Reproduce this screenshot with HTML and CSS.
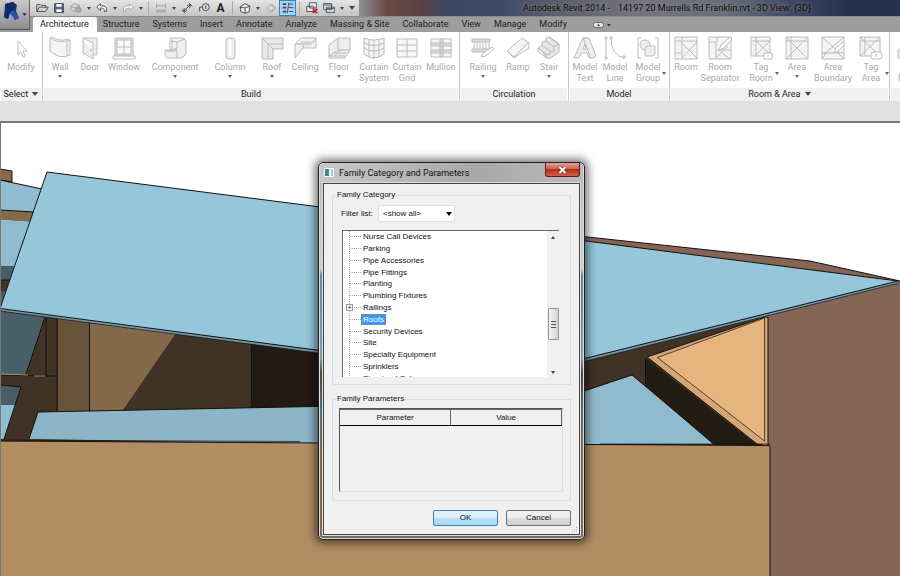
FILE: index.html
```html
<!DOCTYPE html>
<html lang="en">
<head>
<meta charset="utf-8">
<title>Autodesk Revit 2014 - 14197 20 Murrells Rd Franklin.rvt - 3D View: {3D}</title>
<link rel="stylesheet" href="styles.css">
</head>
<body>
<header class="top">
  <button class="app-button" aria-label="Application menu">
    <svg width="30" height="30" viewBox="0 0 30 30">
      <path d="M5 4L13 2L17 5L16 11L19 18L15 20L10 13L8 19L4 17Z" fill="#123a84"/>
      <path d="M5 4L13 2L16 5L14 10L10 12L8 19L4 17L6 10Z" fill="#0d2a66"/>
      <path d="M10 12L14 10L19 18L15 20Z" fill="#2557ad"/>
      <path d="M22 13h5l-2.500 3z" fill="#444"/>
    </svg>
  </button>
  <div class="top-rows">
    <div class="title-row">
      <nav class="quick" aria-label="Quick access">
        <button class="q" aria-label="Open"><svg viewBox="0 0 16 16"><path d="M2 12V4h4l1 1h5v2M2 12l3-5h10l-3 5z"/></svg></button>
        <button class="q" aria-label="Save"><svg viewBox="0 0 16 16"><path d="M3 3h10v10H3z" fill="#5c6470"/><path d="M5 3.500h6v3H5zM5 9.500h6v3H5z" fill="#fff" stroke="none"/></svg></button>
        <button class="q faint" aria-label="Synchronize"><svg viewBox="0 0 16 16"><path d="M2 6l5-3 5 2v4l-5 3-5-2zM2 6l5 2 5-3M7 8v4" fill="#ddd"/><circle cx="11" cy="10" r="3" fill="#aaa"/></svg></button>
        <i class="caret"></i>
        <button class="q" aria-label="Undo"><svg viewBox="0 0 16 16"><path d="M2 7l4-4v2.500c5 0 8 1 7 6.500h-2c0-3-1-4-5-4V11z" fill="#fff"/></svg></button>
        <i class="caret"></i>
        <button class="q faint" aria-label="Redo"><svg viewBox="0 0 16 16"><path d="M14 7l-4-4v2.500c-5 0-8 1-7 6.500h2c0-3 1-4 5-4V11z" fill="#fff"/></svg></button>
        <i class="caret"></i>
        <i class="bar"></i>
        <button class="q faint" aria-label="Measure"><svg viewBox="0 0 16 16"><path d="M3 3v5M13 3v5M3 5.500h10M3 10.500h10v2H3z"/></svg></button>
        <i class="caret"></i>
        <button class="q" aria-label="Aligned dimension"><svg viewBox="0 0 16 16"><path d="M4 12l8-8M2 10l4 4M10 2l4 4M4 12l1-4M4 12l4-1M12 4l-1 4M12 4l-4 1"/></svg></button>
        <button class="q" aria-label="Tag by category"><svg viewBox="0 0 16 16"><circle cx="10" cy="7" r="4"/><path d="M6 7H3v5M10 5v4"/></svg></button>
        <button class="q q-text" aria-label="Text">A</button>
        <i class="bar"></i>
        <button class="q" aria-label="Default 3D view"><svg viewBox="0 0 16 16"><path d="M2 7l6-4 6 3-1 1v5l-5 2-5-2V7zM8 8v6M3 7l5 1 5-2" fill="#eee"/></svg></button>
        <i class="caret"></i>
        <button class="q faint" aria-label="Section"><svg viewBox="0 0 16 16"><path d="M4 8l4-4 4 4-4 4zM8 3l5 5-5 5" fill="#ddd"/></svg></button>
        <button class="q q-on" aria-label="Thin lines"><svg viewBox="0 0 16 16"><path d="M2 3.500h4M2 7.500h4M2 12h4" stroke-width="2"/><path d="M9 3.500h5M9 7.500h5M9 12h5M9 2L7 14"/></svg></button>
        <i class="bar"></i>
        <button class="q" aria-label="Close hidden windows"><svg viewBox="0 0 16 16"><path d="M5 2h8v6H5zM2 6h8v6H2z" fill="#eee"/><path d="M9 9l5 5M14 9l-5 5" stroke="#c8202c" stroke-width="2"/></svg></button>
        <button class="q" aria-label="Switch windows"><svg viewBox="0 0 16 16"><path d="M2 3h9v7H2zM5 7h9v6H5zM2 4.500h9M5 8.500h9" fill="#eee"/></svg></button>
        <i class="caret"></i>
        <i class="caret caret-big"></i>
      </nav>
      <h1 class="app-title"><span>Autodesk Revit 2014 -</span><span>14197 20 Murrells Rd Franklin.rvt - 3D View: {3D}</span></h1>
    </div>
    <nav class="tabs" aria-label="Ribbon tabs">
      <a class="tab active" href="#">Architecture</a><a class="tab" href="#">Structure</a><a class="tab" href="#">Systems</a><a class="tab" href="#">Insert</a><a class="tab" href="#">Annotate</a><a class="tab" href="#">Analyze</a><a class="tab" href="#">Massing &amp; Site</a><a class="tab" href="#">Collaborate</a><a class="tab" href="#">View</a><a class="tab" href="#">Manage</a><a class="tab" href="#">Modify</a>
      <button class="minimize" aria-label="Minimize ribbon"><svg width="20" height="8" viewBox="0 0 20 8"><rect x=".5" y="1.500" width="10" height="5" rx="2" fill="#e4e4e4" stroke="#666"/><path d="M4 5h3L5.500 3zM14 3h4l-2 2.500z" fill="#333"/></svg></button>
    </nav>
  </div>
</header>

<div class="ribbon">
  <section class="panel select">
    <div class="tools">
      <button class="tool"><svg viewBox="0 0 24 24"><path d="M9 5v14l3-3 2 5 2-1-2-5h4z" fill="#fff"/></svg><span>Modify</span></button>
    </div>
    <h2>Select <i class="caret"></i></h2>
  </section>
  <section class="panel build">
    <div class="tools">
      <button class="tool"><svg viewBox="0 0 24 24"><path d="M2 2q9 6 20 2v15q-10 5-20-4z" fill="#f4f4f4"/><path d="M2 2l2-1q8 5 16 2l2 1M19 5v15"/></svg><span>Wall</span><i class="caret"></i></button>
      <button class="tool"><svg viewBox="0 0 24 24"><path d="M5 2h14v17h-4M5 2v15l10 6V7z" fill="#eee"/><circle cx="13" cy="14" r="1"/></svg><span>Door</span></button>
      <button class="tool"><svg viewBox="0 0 24 24"><path d="M3 2h18v18H3z" fill="#e6e6e6"/><path d="M5 4h14v14H5zM12 4v14M5 11h14" fill="#fafafa"/><path d="M1 20h22v3H1z" fill="#fff"/></svg><span>Window</span></button>
      <button class="tool"><svg viewBox="0 0 24 24"><path d="M7 2h14l2 3v13l-4 4H4l-2-3v-5h7V5z" fill="#f0f0f0"/><path d="M7 5v9h7v8M14 12l-5 2M14 12V6l8-3M14 6L7 5M14 12l-3 2M3 15h10"/></svg><span>Component</span><i class="caret"></i></button>
      <button class="tool"><svg viewBox="0 0 24 24"><rect x="8" y="2" width="9" height="21" rx="3" fill="#eee"/><path d="M12 4v16" stroke="#fff" stroke-width="3"/></svg><span>Column</span><i class="caret"></i></button>
      <button class="tool"><svg viewBox="0 0 24 24"><path d="M2 2h21v11H13v10H2z" fill="#e8e8e8"/><path d="M2 2l6 6h15M8 8v15M8 8l5 5"/></svg><span>Roof</span><i class="caret"></i></button>
      <button class="tool"><svg viewBox="0 0 24 24"><path d="M8 2h15l-5 6H2z" fill="#f6f6f6"/><path d="M2 8h16l5-6v10H10l-8 10z" fill="#eee"/><path d="M7 6h11M10 12V8"/></svg><span>Ceiling</span></button>
      <button class="tool"><svg viewBox="0 0 24 24"><path d="M11 2h12v12l-5 8H2v-7V9z" fill="#eee"/><path d="M11 2v12l-9 6M11 14h12M2 20h16M7 17h13M14 14l-7 6"/></svg><span>Floor</span><i class="caret"></i></button>
      <button class="tool"><svg viewBox="0 0 24 24"><path d="M2 2q10 4 20 0v16q-10 8-20 0z" fill="#f4f4f4"/><path d="M2 7q10 5 20 0M2 12q10 6 20 0M7 4v17M12 4v19M17 4v17"/></svg><span>Curtain<br>System</span></button>
      <button class="tool"><svg viewBox="0 0 24 24"><path d="M2 3h20v18H2zM2 9h20M2 15h20M12 3v18" fill="#f8f8f8"/></svg><span>Curtain<br>Grid</span></button>
      <button class="tool"><svg viewBox="0 0 24 24"><path d="M2 3h20v18H2z" fill="#f8f8f8"/><path d="M2 7h20v3H2zM2 14h20v3H2zM11 3h3v18h-3z" fill="#ddd"/></svg><span>Mullion</span></button>
    </div>
    <h2>Build</h2>
  </section>
  <section class="panel circulation">
    <div class="tools">
      <button class="tool"><svg viewBox="0 0 24 24"><path d="M1 3h18v3H1zM1 13h18v3H1zM3 6v7M6 6v7M9 6v7M12 6v7M15 6v7M18 6v7" fill="#ddd"/><path d="M10 21l2-4 9-6 2 2-8 7z" fill="#fff"/></svg><span>Railing</span><i class="caret"></i></button>
      <button class="tool"><svg viewBox="0 0 24 24"><path d="M1 15L16 2l7 5v5L8 22z" fill="#f4f4f4"/><path d="M1 15l7 6L22 7"/></svg><span>Ramp</span></button>
      <button class="tool"><svg viewBox="0 0 24 24"><path d="M1 12l4-3V6l4-1V2l4-1 9 7v8l-10 7-4-2-2-5z" fill="#e6e6e6"/><path d="M1 12l8 6v4M5 9l8 6v3l-4 1M9 5l8 6v4l-4 1M13 2l9 6-5 3M1 12v3l8 7"/></svg><span>Stair</span><i class="caret"></i></button>
    </div>
    <h2>Circulation</h2>
  </section>
  <section class="panel model">
    <div class="tools">
      <button class="tool"><svg viewBox="0 0 24 24"><path d="M1 22L10 2h6l7 18-3 2h-4l-2-5H8l-2 5zM10 13h3l-1-5z" fill="#eee"/><path d="M10 2l7 18v2M10 2h5"/></svg><span>Model<br>Text</span></button>
      <button class="tool"><svg viewBox="0 0 24 24"><path d="M3 2v20M8 2q0 17 13 20"/><path d="M2 1h2v2H2zM2 21h2v2H2zM7 1h2v2H7zM20 20h2v2h-2z" fill="#fff"/></svg><span>Model<br>Line</span></button>
      <button class="tool side"><svg viewBox="0 0 24 24"><path d="M5 2H2v20h3M19 2h3v20h-3"/><circle cx="9" cy="9" r="5" fill="#f0f0f0"/><path d="M9 12l2-2h8v8l-2 2H9z" fill="#eee"/></svg><span>Model<br>Group</span><i class="caret"></i></button>
    </div>
    <h2>Model</h2>
  </section>
  <section class="panel room">
    <div class="tools">
      <button class="tool"><svg viewBox="0 0 24 24"><path d="M1 1h22v22H1z" fill="#f4f4f4"/><path d="M1 5h22M8 1v22M8 7l15 15M23 6L8 22M1 17h7"/></svg><span>Room</span></button>
      <button class="tool"><svg viewBox="0 0 24 24"><path d="M1 1h22v22H1z" fill="#f4f4f4"/><path d="M1 6h8V1M8 6v17M8 14h15M8 22l12-12M10 14l12 9"/><path d="M11 14l2-5 9-8 2 2-8 9z" fill="#fff"/></svg><span>Room<br>Separator</span></button>
      <button class="tool side"><svg viewBox="0 0 24 24"><path d="M2 1h19v19H2z" fill="#f4f4f4"/><path d="M2 5h19M7 1v19M7 5l14 13M21 5L7 19"/><path d="M15 17h8v6h-8zM19 19v2" fill="#fff"/></svg><span>Tag<br>Room</span><i class="caret"></i></button>
      <button class="tool"><svg viewBox="0 0 24 24"><path d="M1 1h22v22H1z" fill="#f4f4f4"/><path d="M1 5h22M6 1v22M1 1l22 22M23 1L1 23"/></svg><span>Area</span><i class="caret"></i></button>
      <button class="tool"><svg viewBox="0 0 24 24"><path d="M1 1h22v22H1z" fill="#f4f4f4"/><path d="M1 17h22M1 1l18 16M23 1L3 18M5 17l-4 6M17 17l6 6"/><path d="M13 17l2-5 7-6 2 2-7 7z" fill="#fff"/></svg><span>Area<br>Boundary</span></button>
      <button class="tool side"><svg viewBox="0 0 24 24"><path d="M1 1h20v19H1z" fill="#f4f4f4"/><path d="M1 5h20M6 1v19M1 1l20 19M21 1L1 20"/><rect x="12" y="16" width="11" height="7" rx="3" fill="#fff"/><path d="M17 18v3"/></svg><span>Tag<br>Area</span><i class="caret"></i></button>
    </div>
    <h2>Room &amp; Area <i class="caret"></i></h2>
  </section>
  <section class="panel next">
    <div class="tools">
      <button class="tool"><svg viewBox="0 0 24 24"><path d="M2 22v-8l5-3 5 3v8zM5 8l3-4 3 3" fill="#eee"/></svg><span>By<br>Face</span></button>
    </div>
    <h2></h2>
  </section>
</div>
<div class="options-bar"></div>

<main class="canvas">
  <svg class="model-view" viewBox="0 123 900 453" preserveAspectRatio="xMinYMin slice" stroke-linejoin="round" aria-label="3D model view">
    <rect y="123" width="900" height="453" fill="#fff"/>
    <path d="M560 234L810 261L900 281V576H560z" fill="#856656"/>
    <path d="M560 234L810 261L900 281" class="edge"/>
    <path d="M0 169L12 171V182L0 180z" fill="#84694a" class="edge"/>
    <path d="M0 180L42 189L34 212H0z" fill="#8fbccf"/><path d="M0 180L42 189" class="edge"/>
    <path d="M0 210L34 212L30 222L0 220z" fill="#84694a"/><path d="M0 210L34 212" class="edge"/>
    <path d="M0 220L30 222L15 267L0 266z" fill="#8fbccf"/>
    <path d="M0 266H15L10 280H0z" fill="#485f68"/>
    <path d="M0 280H10L6 291H0z" fill="#403326"/><path d="M0 280H10" class="edge"/>
    <path d="M0 291H6L0 308z" fill="#485f68"/>
    <path d="M0 310L340 352V450H0z" fill="#403326"/>
    <path d="M0 311L45 317L26 374L0 375z" fill="#485f68"/><path d="M45 317L26 374" class="edge"/>
    <path d="M46 317V376M57 317V376H46L0 375" class="edge"/>
    <path d="M0 374L28 375M34 376H45" stroke="#b08d62"/>
    <path d="M58 317L89 322V411L58 412z" fill="#67523a"/><path d="M57 376V412M89.500 322V411" class="edge"/>
    <path d="M90 322L176 333L123 410L90 411z" fill="#84694a"/>
    <path d="M252 342L340 353V409H252z" fill="#231b13"/><path d="M251.500 342V408" class="edge"/>
    <path d="M0 385L21 387L15 405H0z" fill="#485f68"/><path d="M0 405H15L4 439H0z" fill="#8fbccf"/><path d="M0 385L21 387L4 439" class="edge"/>
    <path d="M38 412L340 406V444L29 439z" fill="#8cb5c7"/><path d="M340 406L38 412L29 439" class="edge"/>
    <path d="M560 360L768 317V446H560z" fill="#403326"/>
    <path d="M560 399L632 375L714 444H560z" fill="#90bbcf"/><path d="M560 399L632 375L714 444" class="edge"/>
    <path d="M645.500 358L757 445H714L645.500 386z" fill="#231c13"/><path d="M645.500 358V386" class="edge"/>
    <path d="M647 357L765 317H768V446L757 444z" fill="#d3a577" class="edge"/>
    <path d="M657.500 357.500L762 319L764.500 318V441z" fill="#e6b57f" class="edge thin"/>
    <path d="M47 172L898 281L514 376L0 308.500z" fill="#96c6da"/>
    <path d="M0 308.500L514 376L898 281L899 283L514 379L0 311z" fill="#6f9aab"/>
    <path d="M47 172L898 281L514 376L0 308.500z" class="edge"/>
    <path d="M0 311L514 379L899 283" class="edge thin"/>
    <path d="M0 441L320 443L770 445.500V576H0z" fill="#b08d62"/>
    <path d="M0 441L320 443L770 445.500V576" class="edge"/>
    <path d="M0 440L300 441.500M600 444H770" class="edge thin"/>
    <path d="M.5 123V576" stroke="#777"/>
  </svg>

  <section class="dialog" role="dialog" aria-labelledby="dialog-title">
    <header class="dialog-bar">
      <svg class="dialog-icon" width="10" height="9" viewBox="0 0 10 9"><rect width="10" height="9" fill="#f4f7f8"/><rect x="1" y="1" width="4" height="7" fill="#3c8a82"/><rect x="7" y="1" width="2" height="7" fill="#b7c4d0"/></svg>
      <h2 id="dialog-title">Family Category and Parameters</h2>
      <button class="close" aria-label="Close"><svg width="9" height="8" viewBox="0 0 9 8"><path d="M1.500 1l6 6M7.500 1l-6 6" stroke="#5c2a2a" stroke-width="3"/><path d="M1.500 1l6 6M7.500 1l-6 6" stroke="#fff" stroke-width="2"/></svg></button>
    </header>
    <form class="dialog-body">
      <fieldset class="category">
        <legend>Family Category</legend>
        <div class="filter">
          <label for="filter">Filter list:</label>
          <span class="combo"><select id="filter"><option>&lt;show all&gt;</option></select><i class="caret"></i></span>
        </div>
        <div class="listbox">
          <ul class="tree" role="tree">
            <li role="treeitem"><span>Nurse Call Devices</span></li>
            <li role="treeitem"><span>Parking</span></li>
            <li role="treeitem"><span>Pipe Accessories</span></li>
            <li role="treeitem"><span>Pipe Fittings</span></li>
            <li role="treeitem"><span>Planting</span></li>
            <li role="treeitem"><span>Plumbing Fixtures</span></li>
            <li role="treeitem" class="expandable" aria-expanded="false"><span>Railings</span></li>
            <li role="treeitem" aria-selected="true"><span>Roofs</span></li>
            <li role="treeitem"><span>Security Devices</span></li>
            <li role="treeitem"><span>Site</span></li>
            <li role="treeitem"><span>Specialty Equipment</span></li>
            <li role="treeitem"><span>Sprinklers</span></li>
            <li role="treeitem"><span>Structural Columns</span></li>
          </ul>
          <div class="scroll"><i class="caret up"></i><i class="thumb"></i><i class="caret"></i></div>
        </div>
      </fieldset>
      <fieldset class="parameters">
        <legend>Family Parameters</legend>
        <div class="grid-box">
          <table><thead><tr><th scope="col">Parameter</th><th scope="col">Value</th></tr></thead></table>
        </div>
      </fieldset>
      <div class="actions">
        <button type="button" class="btn primary">OK</button>
        <button type="button" class="btn">Cancel</button>
      </div>
      <svg class="grip" width="6" height="6" viewBox="0 0 6 6"><path d="M4 0h1v1H4zM2 2h1v1H2zM4 2h1v1H4zM0 4h1v1H0zM2 4h1v1H2zM4 4h1v1H4z" fill="#b4b4b4"/></svg>
    </form>
  </section>
</main>
</body>
</html>
```
FILE: styles.css
```css
* { box-sizing: border-box; }

body {
  margin: 0;
  min-height: 100vh;
  display: flex;
  flex-direction: column;
  overflow: hidden;
  font: 9px/11px Roboto, "Open Sans", sans-serif;
  color: #1e1e1e;
}

button { font: inherit; color: inherit; border: 0; padding: 0; background: none; }
svg { display: block; fill: none; }
h1, h2 { margin: 0; font: inherit; }

.caret {
  flex: none;
  display: inline-block;
  border: solid transparent;
  border-width: 3px 2px 0;
  border-top-color: #444;
}

/* Title bar and tabs */
.top { display: flex; background: #9d9d9d; }
.app-button {
  width: 30px;
  height: 30px;
  background: linear-gradient(#c9c9c9, #8d8d8d);
  border-right: 1px solid #666;
  border-bottom: 1px solid #555;
}
.top-rows { flex: 1; min-width: 0; }
.title-row {
  display: flex;
  height: 17px;
  background: linear-gradient(90deg, #8a8c90 38%, #6a4a44 41%, #5c4144 45%, #3a4560 48%, #3e4a68 54%, #5a5c6a 60%, #75747c 70%, #6a6c78 80%, #3c4662 88%, #26324c 94%);
  border-bottom: 1px solid #8a8a8a;
}
.quick {
  display: flex;
  align-items: center;
  width: 329px;
  padding-left: 3px;
  background: linear-gradient(#e4e4e4, #c4c4c4);
}
.q { width: 17px; height: 16px; flex: none; display: flex; justify-content: center; align-items: center; }
.q svg { width: 14px; height: 14px; stroke: #3c444e; }
.q.faint svg { stroke: #999; }
.q-text { font: bold 12px/14px Roboto, sans-serif; }
.q-on { background: #a9d0f5; border: 1px solid #3c7fc0; }
.quick .caret { margin: 0 2px 0 3px; }
.quick .caret-big { border-width: 4px 3px 0; }
.bar { flex: none; width: 1px; height: 14px; margin: 0 3px; background: #aaa; }
.app-title {
  display: flex;
  gap: 8px;
  margin-left: 164px;
  line-height: 16px;
  white-space: nowrap;
  color: #0c0c10;
  text-shadow: 0 0 5px #999;
}
.tabs { display: flex; height: 15px; padding-left: 3px; }
.tab { padding: 0 7px 0 6px; line-height: 15px; color: #222; text-decoration: none; white-space: nowrap; }
.tab.active { padding: 0 8px 0 7px; background: linear-gradient(#f8f8f8, #fff); border-radius: 2px 2px 0 0; }
.minimize { margin-left: 19px; }

/* Ribbon */
.ribbon { display: flex; height: 69px; overflow: hidden; background: #fff; }
.panel { flex: none; display: flex; flex-direction: column; border-right: 1px solid #c8c8c8; padding: 0 1px; }
.tools { flex: 1; display: grid; }
.tool {
  position: relative;
  display: flex;
  flex-direction: column;
  align-items: center;
  padding-top: 4px;
  color: #aaa;
  white-space: nowrap;
}
.tool svg { width: 24px; height: 24px; margin-bottom: 2px; stroke: #bcbcbc; }
.tool .caret { margin-top: 2px; border-top-color: #666; }
.tool.side .caret { position: absolute; left: calc(50% + 14px); top: 38px; }
.panel h2 {
  height: 13px;
  line-height: 12px;
  background: #f0f0f0;
  text-align: center;
  white-space: nowrap;
}
.panel h2 .caret { border-width: 4px 3px 0; margin: 0 0 1px 2px; }
.select { width: 43px; }
.build { width: 417px; }
.build .tools { grid-template-columns: 32px 28px 40px 62px 48px 36px 30px 38px 32px 34px 34px; }
.circulation { width: 109px; }
.circulation .tools { grid-template-columns: 44px 26px 36px; }
.model { width: 101px; }
.model .tools { grid-template-columns: 30px 30px 36px; }
.room { width: 220px; }
.room .tools { grid-template-columns: 30px 38px 44px 28px 44px 32px; }
.next { width: 36px; }
.options-bar { height: 22px; background: #e0e1e3; border-bottom: 2px solid #777; }

/* Model canvas */
.canvas { position: relative; flex: 1; min-height: 453px; }
.model-view { position: absolute; inset: 0; width: 100%; height: 100%; }
.edge { stroke: #15120e; stroke-width: 1; }
.thin { stroke-opacity: .7; }

/* Dialog */
.dialog {
  position: absolute;
  top: 39px;
  left: calc(50% - 132px);
  width: 267px;
  padding: 0 4px 4px;
  border: 1px solid #222;
  border-radius: 5px;
  background: linear-gradient(#b9b9b9, #cfcfcf 28%, #6b8794 30%, #7f9ea9 52%, #51463a 56%, #52707c 66%, #7b6a55 75%, #7b6a55);
  box-shadow: inset 0 0 0 1px #ddd, 0 0 9px 3px rgba(0, 0, 0, .55);
  font: 8px/10px "Liberation Sans", Arial, sans-serif;
  color: #111;
}
.dialog-bar { display: flex; align-items: flex-start; height: 20px; margin: 0 -3px; padding: 0 3px 0 4px; border-radius: 4px 4px 0 0; background: linear-gradient(90deg, #c8c8c8, #a8a8a8 60%, #bbb); }
.dialog-icon { margin-top: 5px; }
.dialog-bar h2 { flex: 1; margin-left: 5px; font: 9px/20px Roboto, sans-serif; }
.close {
  display: grid;
  place-items: center;
  width: 35px;
  height: 14px;
  border: 1px solid #5a1f1a;
  border-top: 0;
  border-radius: 0 0 3px 3px;
  background: linear-gradient(#e2a295, #cc5f4d 48%, #b42d18 50%, #cf6048);
}
.dialog-body { position: relative; padding: 6px 8px 8px; background: #f0f0f0; border: 1px solid #444; outline: 1px solid #ddd; }
fieldset { min-width: 0; margin: 0; padding: 0; border: 1px solid #d3dde5; border-radius: 2px; }
legend { margin-left: 3px; padding: 0 1px; }
.filter { display: flex; align-items: center; margin: 5px 11px 8px 8px; }
.combo { position: relative; width: 77px; height: 17px; margin-left: 5px; }
.combo select {
  width: 100%;
  height: 100%;
  padding: 0 4px;
  font: inherit;
  color: inherit;
  appearance: none;
  background: #fff;
  border: 1px solid #dde2e8;
  border-radius: 1px;
}
.combo .caret { position: absolute; right: 3px; top: 7px; border-width: 4px 3px 0; border-top-color: #000; }
.listbox { display: flex; height: 147px; margin: 0 11px 7px 9px; overflow: hidden; background: #fff; border: solid #696969; border-width: 1px 0 0 1px; }
.tree {
  flex: 1;
  display: grid;
  grid-template-rows: repeat(13, 1fr);
  height: 153px;
  margin: 0 0 0 6px;
  padding: 0;
  list-style: none;
  border-left: 1px dotted #aaa;
}
.tree li { position: relative; display: flex; align-items: center; white-space: nowrap; }
.tree li::before { content: ""; width: 11px; border-top: 1px dotted #aaa; }
.tree span { padding: 0 1px; border: 1px solid transparent; line-height: 9px; }
.tree [aria-selected] span { background: #3399ff; color: #fff; border: 1px dotted #c87830; }
.expandable::after {
  content: "+";
  box-sizing: border-box;
  position: absolute;
  left: -4px;
  width: 7px;
  height: 7px;
  border: 1px solid #999;
  background: #fff;
  font-size: 7px;
  line-height: 5px;
  text-align: center;
}
.scroll { display: flex; flex-direction: column; align-items: center; width: 12px; padding: 5px 0 3px; background: #f0f0f0; }
.caret.up { transform: rotate(180deg); }
.thumb {
  width: 11px;
  height: 32px;
  margin: 69px 0 auto;
  border: 1px solid #979797;
  border-radius: 1px;
  background: linear-gradient(#555 0 0) center 12px / 5px 1px no-repeat, linear-gradient(#555 0 0) center 15px / 5px 1px no-repeat, linear-gradient(#555 0 0) center 18px / 5px 1px no-repeat, linear-gradient(90deg, #f4f4f4, #cfcfd2);
}
.parameters { margin-top: 9px; }
.grid-box { height: 84px; margin: 4px 7px 8px 6px; border: 1px solid #ddd; border-left-color: #555; border-top-color: #555; }
table { width: 100%; border-collapse: collapse; }
th { width: 50%; height: 16px; padding: 0; font-weight: normal; border: solid #666; border-width: 1px 1px 1px 0; border-bottom-color: #000; }
.actions { display: flex; justify-content: flex-end; gap: 8px; margin-top: 9px; }
.btn { width: 65px; height: 16px; border: 1px solid #707070; border-radius: 2px; background: linear-gradient(#f2f2f2, #ebebeb 48%, #dcdcdc 50%, #cfcfcf); }
.primary { border-color: #3c7fb1; background: linear-gradient(#e6f4fc, #d5edfb 48%, #b8e2f9 50%, #a5d8f5); }
.grip { position: absolute; right: 1px; bottom: 1px; }
```
